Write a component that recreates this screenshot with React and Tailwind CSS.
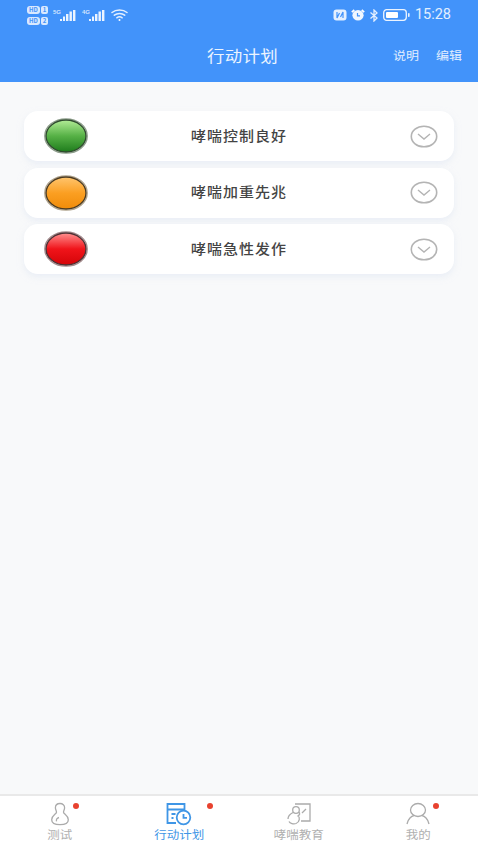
const cjk = { fontFamily: '"Noto Sans CJK SC", "Noto Sans", sans-serif' };

const Sim = ({ n }) => (
  <div className="flex items-center gap-[1px]">
    <span className="flex h-[8px] w-[13px] items-center justify-center rounded-[3px] bg-white/80 text-[6px] font-bold leading-none text-[#4293fa]">HD</span>
    <span className="flex h-[8px] w-[7px] items-center justify-center rounded-[2px] bg-white/80 text-[6px] font-bold leading-none text-[#4293fa]">{n}</span>
  </div>
);

const Signal = ({ label }) => (
  <svg width="23" height="16" viewBox="0 0 23 16">
    <text x="0" y="7" fontSize="6" fontWeight="700" fill="#fff" fillOpacity=".75" fontFamily="Liberation Sans, sans-serif">{label}</text>
    <g fill="#fff" fillOpacity=".9">
      <rect x="7" y="12" width="2" height="2" />
      <rect x="10" y="9.500" width="2" height="4.500" />
      <rect x="13" y="7" width="2.400" height="7" />
      <rect x="16.500" y="4.500" width="2.400" height="9.500" />
      <rect x="20" y="3" width="2.400" height="11" />
    </g>
  </svg>
);

const Wifi = () => (
  <svg width="17" height="14" viewBox="0 0 17 14" fill="none" stroke="#fff" strokeOpacity=".85" strokeWidth="1.500" strokeLinecap="round">
    <path d="M1 4.500C5 1 12 1 16 4.500" />
    <path d="M3.300 7.200C6.300 4.800 10.700 4.800 13.700 7.200" />
    <path d="M5.800 9.800C7.500 8.600 9.500 8.600 11.200 9.800" />
    <circle cx="8.500" cy="12" r="1" fill="#fff" stroke="none" />
  </svg>
);

const Nfc = () => (
  <svg width="14" height="12" viewBox="0 0 14 12">
    <rect x=".5" y=".5" width="13" height="11" rx="3" fill="#fff" fillOpacity=".85" />
    <path d="M4 3v6l2.500-5M10 9V3L7.500 8" stroke="#4293fa" strokeWidth="1.200" fill="none" />
  </svg>
);

const Alarm = () => (
  <svg width="14" height="12" viewBox="0 0 14 12">
    <ellipse cx="7" cy="6.300" rx="5.600" ry="5.200" fill="#fff" fillOpacity=".92" />
    <path d="M.8 3.200 3.300 1M13.200 3.200 10.700 1" stroke="#fff" strokeWidth="1.700" />
    <path d="M6.500 4v2.800h2.500" stroke="#4293fa" strokeWidth="1.200" fill="none" />
  </svg>
);

const Bluetooth = () => (
  <svg width="10" height="13" viewBox="0 0 10 13" fill="none" stroke="#fff" strokeOpacity=".85" strokeWidth="1.300">
    <path d="M1.500 3.500 8 9 5 12V1l3 3-6.500 5.500" />
  </svg>
);

const Battery = () => (
  <svg width="27" height="12" viewBox="0 0 27 12">
    <rect x=".7" y=".7" width="22.600" height="10.600" rx="3" fill="none" stroke="#fff" strokeOpacity=".9" strokeWidth="1.300" />
    <rect x="3" y="3" width="12" height="6" rx="1" fill="#fff" />
    <rect x="25" y="4" width="1.600" height="4" rx=".8" fill="#fff" fillOpacity=".9" />
  </svg>
);

const lights = [
  { label: '哮喘控制良好', top: '#b2ec96', mid: '#56b146', low: '#1e7c1c', ring: '#2f4a2e', rim: '#8c9c8a' },
  { label: '哮喘加重先兆', top: '#ffc56e', mid: '#fb9f22', low: '#f08c0a', ring: '#4b3a20', rim: '#b0a48e' },
  { label: '哮喘急性发作', top: '#ff8f8f', mid: '#f0141a', low: '#d40408', ring: '#4e3033', rim: '#a48c8e' },
];

const Light = ({ id, top, mid, low, ring, rim }) => (
  <svg width="44" height="36" viewBox="0 0 44 36">
    <defs>
      <linearGradient id={id} x1="0" y1="0" x2="0" y2="1">
        <stop offset="0" stopColor={top} />
        <stop offset=".5" stopColor={mid} />
        <stop offset="1" stopColor={low} />
      </linearGradient>
    </defs>
    <ellipse cx="22" cy="18" rx="21.300" ry="17.200" fill="none" stroke={rim} strokeWidth="1.200" />
    <ellipse cx="22" cy="18" rx="20" ry="16" fill={`url(#${id})`} stroke={ring} strokeWidth="1.400" />
  </svg>
);

const Chevron = () => (
  <svg width="28" height="23" viewBox="0 0 28 23" fill="none" stroke="#b4b4b4">
    <ellipse cx="14" cy="11.500" rx="12.700" ry="10.300" strokeWidth="1.600" />
    <path d="M8 9 14 14 20 9" strokeWidth="1.400" />
  </svg>
);

const tabs = [
  {
    label: '测试', dot: 'ml-[3px]',
    icon: (
      <svg width="20" height="24" viewBox="0 0 20 24" fill="none" stroke="#ababab" strokeWidth="1.300">
        <path d="M10 1.500c-2.800 0-4.600 1.900-4.600 4.200 0 2 1.100 3 1.100 4.500 0 1.800-4.800 3.200-4.800 7.500 0 3.300 3.200 5 8.300 5s8.300-1.700 8.300-5c0-4.300-4.800-5.700-4.800-7.500 0-1.500 1.100-2.500 1.100-4.500 0-2.300-1.800-4.200-4.600-4.200z" />
        <path d="M9 15.500c-2 .5-3 2-2.500 3.800" />
      </svg>
    ),
  },
  {
    label: '行动计划', dot: 'ml-[14px]', active: true,
    icon: (
      <svg width="28" height="24" viewBox="0 0 28 24" fill="none" stroke="#3f96e6" strokeWidth="1.800">
        <path d="M11 21H2.500V2h17v7" />
        <path d="M3 7.500h16M6.500 12h4M6.500 16h2" />
        <circle cx="18.500" cy="15.500" r="6.800" />
        <path d="M18.500 12v3.800h3.500" />
      </svg>
    ),
  },
  {
    label: '哮喘教育', dot: '',
    icon: (
      <svg width="26" height="24" viewBox="0 0 26 24" fill="none" stroke="#ababab" strokeWidth="1.300">
        <path d="M9 2h15v17H15" />
        <circle cx="10" cy="8" r="3.300" />
        <path d="M7 10.500C4 12 2 14 2 17M13 10c1 1.500.5 3-1 4 2 1 2 6-2 7.500-2.500.8-6 0-7-2" />
        <path d="M20 7l-4 4" />
      </svg>
    ),
  },
  {
    label: '我的', dot: 'ml-[2px]',
    icon: (
      <svg width="26" height="24" viewBox="0 0 26 24" fill="none" stroke="#ababab" strokeWidth="1.300">
        <ellipse cx="13" cy="8" rx="7.500" ry="6.500" />
        <path d="M2 22c1-5 4.500-8 7-8.500M24 22c-1-5-4.500-8-7-8.500" />
      </svg>
    ),
  },
];

export default function App() {
  return (
    <div className="flex h-[850px] w-[478px] flex-col overflow-hidden bg-[#f8f9fa]" style={cjk}>
      {/* header */}
      <header className="flex h-[82px] shrink-0 flex-col bg-[#4293fa] text-white">
        <div className="flex h-[30px] items-center justify-between pl-[27px] pr-[27px]">
          <div className="flex items-center gap-[2px]">
            <div className="mr-[3px] flex flex-col gap-[3px]">
              <Sim n="1" />
              <Sim n="2" />
            </div>
            <Signal label="5G" />
            <div className="w-[2px]" />
            <Signal label="4G" />
            <div className="w-[2px]" />
            <Wifi />
          </div>
          <div className="flex items-center gap-[4px]">
            <Nfc />
            <Alarm />
            <Bluetooth />
            <Battery />
            <span className="ml-[1px] text-[14.500px] leading-none text-white/85" style={{ fontFamily: '"Roboto", sans-serif' }}>15:28</span>
          </div>
        </div>
        <div className="relative flex flex-1 items-center justify-end gap-[17px] pr-[16px]">
          <h1 className="absolute inset-x-0 top-[14px] scale-y-[.88] pl-[7px] text-center text-[17.500px] font-normal leading-[24px] tracking-[.3px] text-white/90">行动计划</h1>
          <span className="scale-y-[.88] text-[13px] text-white/85">说明</span>
          <span className="scale-y-[.88] text-[13px] text-white/85">编辑</span>
        </div>
      </header>

      {/* list */}
      <main className="flex flex-1 flex-col gap-[6.500px] px-[24px] pt-[29px]">
        {lights.map((item, i) => (
          <div key={item.label} className="flex h-[50px] items-center rounded-[14px] bg-white pl-[20px] pr-[16px] shadow-[0_3px_6px_rgba(222,230,243,.55)]">
            <Light id={`light${i}`} {...item} />
            <span className="flex-1 scale-y-[.9] pr-[20px] text-center text-[15px] font-medium tracking-[1px] text-[#444444]">{item.label}</span>
            <Chevron />
          </div>
        ))}
      </main>

      {/* bottom tabs */}
      <nav className="grid h-[56px] shrink-0 grid-cols-4 border-t-2 border-[#e9e9e9] bg-white">
        {tabs.map((t) => (
          <div key={t.label} className="flex flex-col items-center pt-[6px]">
            <div className="relative flex h-[24px] items-center justify-center">
              {t.icon}
              {t.dot && <span className={`absolute left-full top-[1px] h-[6px] w-[6px] rounded-full bg-[#e8422f] ${t.dot}`} />}
            </div>
            <span className={`scale-y-[.9] pt-[1px] text-[12.500px] leading-[16px] ${t.active ? 'text-[#3f96e6]' : 'text-[#b0b0b0]'}`}>{t.label}</span>
          </div>
        ))}
      </nav>
    </div>
  );
}
